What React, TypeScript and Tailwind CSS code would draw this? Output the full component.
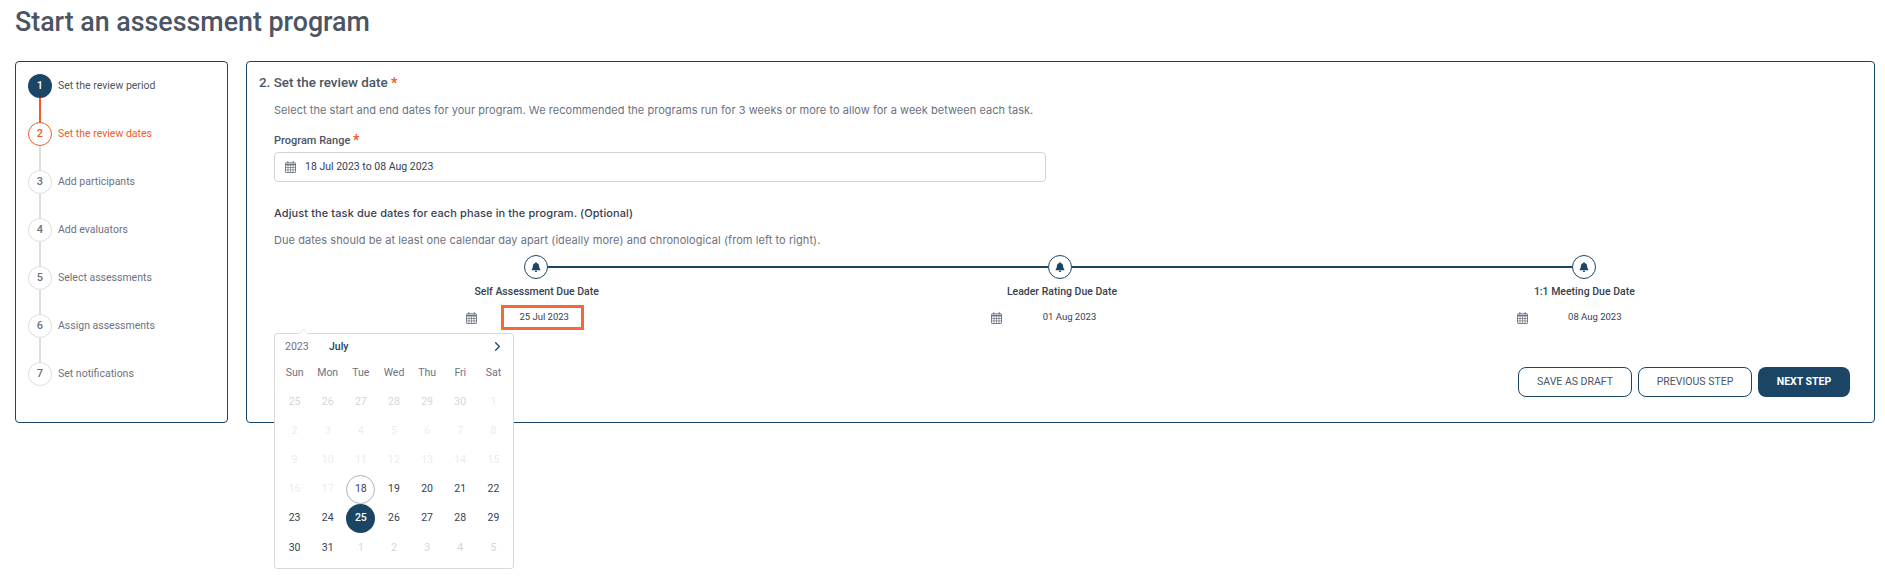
import { ChevronRight } from 'lucide-react';
import { FaBell } from 'react-icons/fa';

const NAVY = '#1a4565';

const steps = [
  'Set the review period',
  'Set the review dates',
  'Add participants',
  'Add evaluators',
  'Select assessments',
  'Assign assessments',
  'Set notifications',
];

const phases = [
  { label: 'Self Assessment Due Date', date: '25 Jul 2023', active: true },
  { label: 'Leader Rating Due Date', date: '01 Aug 2023', active: false },
  { label: '1:1 Meeting Due Date', date: '08 Aug 2023', active: false },
];

const weekDays = ['Sun', 'Mon', 'Tue', 'Wed', 'Thu', 'Fri', 'Sat'];

// tone: a = muted (prev month), b = very faint (disabled), c = normal, d = next month
const calendarDays: { day: number; tone: 'a' | 'b' | 'c' | 'd' }[] = [
  ...[25, 26, 27, 28, 29, 30].map((day) => ({ day, tone: 'a' as const })),
  ...[1, 2, 3, 4, 5, 6, 7, 8, 9, 10, 11, 12, 13, 14, 15, 16, 17].map((day) => ({ day, tone: 'b' as const })),
  ...[18, 19, 20, 21, 22, 23, 24, 25, 26, 27, 28, 29, 30, 31].map((day) => ({ day, tone: 'c' as const })),
  ...[1, 2, 3, 4, 5].map((day) => ({ day, tone: 'd' as const })),
];

function CalendarIcon({ className }: { className?: string }) {
  return (
    <svg viewBox="0 0 11 12" className={className} fill="none" stroke="currentColor" strokeWidth="0.9">
      <rect x="0.5" y="1.8" width="10" height="9.7" rx="0.6" />
      <path d="M0.5 6.5h10M0.5 8.9h10M3 4.2v7.3M5.5 4.2v7.3M8 4.2v7.3" strokeWidth="0.7" />
      <path d="M0.5 3.6h10" strokeWidth="1.6" />
      <path d="M2.8 0.3v2M8.2 0.3v2" strokeWidth="1.1" />
    </svg>
  );
}

function Star() {
  return <span className="text-[#f15a29] font-bold text-[14px] leading-none relative top-[1px]">*</span>;
}

function Stepper() {
  return (
    <div className="w-[213px] h-[362px] shrink-0 border-[1.5px] border-[#1a4565] rounded-[4px] pl-[12px] pt-[12px]">
      {steps.map((label, i) => {
        const done = i === 0;
        const current = i === 1;
        return (
          <div key={label} className="flex gap-[6px]">
            <div className="flex flex-col items-center w-[24px]">
              <div
                className={`w-[24px] h-[24px] rounded-full flex items-center justify-center text-[11px] font-medium ${
                  done
                    ? 'bg-[#1a4565] text-white'
                    : current
                      ? 'border-[1.5px] border-[#f15a29] text-[#f15a29]'
                      : 'border-[1.5px] border-[#dedede] text-[#6b7280]'
                }`}
              >
                {i + 1}
              </div>
              {i < steps.length - 1 && (
                <div className={`w-[2px] h-[24px] ${done ? 'bg-[#f15a29]' : 'bg-[#dedede]'}`} />
              )}
            </div>
            <span
              className={`text-[10.5px] leading-[24px] ${
                current ? 'text-[#f15a29]' : done ? 'text-[#4b5563]' : 'text-[#6b7280]'
              }`}
            >
              {label}
            </span>
          </div>
        );
      })}
    </div>
  );
}

function DatePopup() {
  return (
    <div className="absolute left-[15px] top-[232px] w-[240px] h-[236px] bg-white border border-[#d9d9d9] rounded-[3px] px-[3px]">
      <div className="absolute -top-[4px] left-[25px] w-[7px] h-[7px] rotate-45 bg-white border-l border-t border-[#ececec]" />
      <div className="relative flex items-center h-[25px] pl-[7px] pr-[5px] text-[10.5px]">
        <span className="text-[#6b7280] w-[44px]">2023</span>
        <span className="font-medium text-[#1a4565]">July</span>
        <ChevronRight size={15} className="ml-auto text-[#1a4565]" />
      </div>
      <div className="grid grid-cols-7 h-[28px] items-center text-center text-[10.5px] text-[#6b7280]">
        {weekDays.map((d) => (
          <span key={d}>{d}</span>
        ))}
      </div>
      <div className="grid grid-cols-7 auto-rows-[29.2px] text-[10.5px]">
        {calendarDays.map((c, i) => {
          const selected = c.tone === 'c' && c.day === 25;
          const today = c.tone === 'c' && c.day === 18;
          return (
            <div key={i} className="flex items-center justify-center">
              <span
                className={`w-[29px] h-[29px] rounded-full flex items-center justify-center ${
                  selected
                    ? 'bg-[#1a4565] text-white font-medium'
                    : today
                      ? 'border border-[#aab4bf] text-[#374151]'
                      : c.tone === 'c'
                        ? 'text-[#374151]'
                        : c.tone === 'a' || c.tone === 'd'
                          ? 'text-[#d6d6d6]'
                          : 'text-[#ececec]'
                }`}
              >
                {c.day}
              </span>
            </div>
          );
        })}
      </div>
    </div>
  );
}

function BellNode() {
  return (
    <div className="w-[24px] h-[24px] shrink-0 rounded-full border-[1.5px] border-[#1a4565] flex items-center justify-center text-[#1a4565]">
      <FaBell size={10} />
    </div>
  );
}

function ReviewDates() {
  return (
    <div className="flex-1 h-[362px] border-[1.5px] border-[#1a4565] rounded-[4px] pl-[12px] pr-[24px] pt-[12px]">
      <h2 className="text-[13.4px] leading-[18px] font-medium text-[#4b5563]">
        2. Set the review date <Star />
      </h2>
      <div className="relative pl-[15px]">
        <p className="mt-[9px] text-[11px] leading-[18px] text-[#6b7280] font-['Inter',sans-serif] tracking-[0.04px]">
          Select the start and end dates for your program. We recommended the programs run for 3 weeks or more to allow for a week between each task.
        </p>
        <label className="block mt-[13px] text-[11px] leading-[16px] font-medium text-[#4b5563]">
          Program Range <Star />
        </label>
        <div className="mt-[3px] w-[772px] h-[30px] flex items-center gap-[9px] pl-[10px] border border-[#d4d4d4] rounded-[4px] text-[10.5px] text-[#374151]">
          <CalendarIcon className="w-[11px] h-[12px] text-[#6b7280]" />
          18 Jul 2023 to 08 Aug 2023
        </div>
        <h3 className="mt-[22px] text-[11px] leading-[18px] font-medium text-[#374151] font-['Inter',sans-serif] tracking-[0.1px]">
          Adjust the task due dates for each phase in the program. (Optional)
        </h3>
        <p className="mt-[9px] text-[11px] leading-[18px] text-[#6b7280] font-['Inter',sans-serif] tracking-[0.07px]">
          Due dates should be at least one calendar day apart (ideally more) and chronological (from left to right).
        </p>

        {/* timeline */}
        <div className="mt-[6px] flex items-center pl-[250px] pr-[254px]">
          <BellNode />
          <div className="flex-1 h-[2px] bg-[#1a4565]" />
          <BellNode />
          <div className="flex-1 h-[2px] bg-[#1a4565]" />
          <BellNode />
        </div>
        <div className="mt-[5px] grid grid-cols-3">
          {phases.map((p, i) => (
            <div key={p.label} className="flex flex-col items-center">
              <span className={`text-[10.5px] leading-[16px] font-medium text-[#374151] ${i === 2 ? 'pr-[6px]' : ''}`}>{p.label}</span>
              <div className="mt-[5px] h-[25px] flex items-center gap-[24px] pr-[23px]">
                <CalendarIcon className="w-[11px] h-[12px] text-[#6b7280]" />
                <div
                  className={`w-[83px] h-[25px] flex items-center justify-center text-[9.5px] pl-[3px] text-[#374151] ${
                    p.active ? 'border-[3px] border-[#f26a35]' : ''
                  }`}
                >
                  {p.date}
                </div>
              </div>
            </div>
          ))}
        </div>

        <div className="mt-[37px] flex justify-end gap-[6px]">
          <button className="w-[114px] h-[30px] border border-[#1a4565] rounded-[8px] text-[10.5px] text-[#4b5563]">SAVE AS DRAFT</button>
          <button className="w-[114px] h-[30px] border border-[#1a4565] rounded-[8px] text-[10.5px] text-[#4b5563]">PREVIOUS STEP</button>
          <button className="w-[92px] h-[30px] rounded-[8px] text-[10.5px] font-bold text-white" style={{ backgroundColor: NAVY }}>NEXT STEP</button>
        </div>

        <DatePopup />
      </div>
    </div>
  );
}

export default function App() {
  return (
    <div className="min-h-[587px] bg-white pl-[15px] pr-[10px] font-['Roboto',sans-serif]">
      <h1 className="h-[61px] pt-[5px] text-[26.8px] leading-[34px] font-medium text-[#4b5563]">Start an assessment program</h1>
      <div className="flex gap-[18px]">
        <Stepper />
        <ReviewDates />
      </div>
    </div>
  );
}
